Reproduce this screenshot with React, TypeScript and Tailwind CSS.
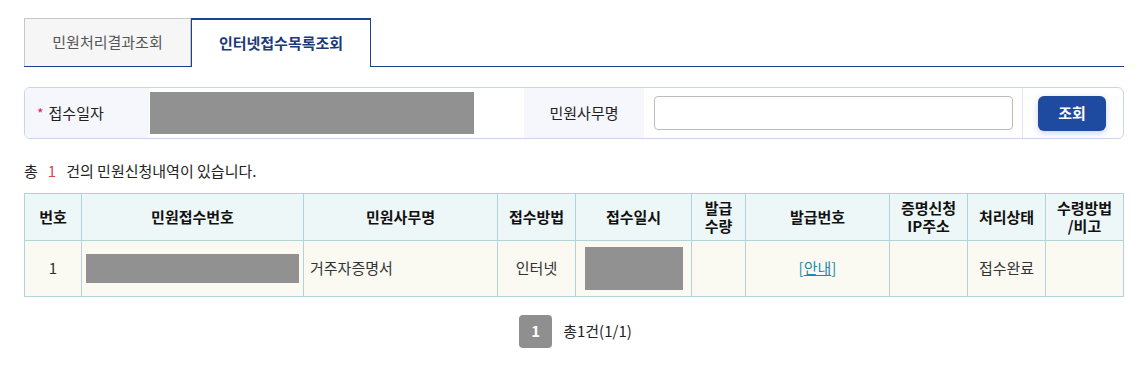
import React from 'react'

const font = { fontFamily: '"Noto Sans CJK KR", "Noto Sans", sans-serif' }

const cols = [
  { w: 'w-[57px]', h: '번호' },
  { w: 'w-[222px]', h: '민원접수번호' },
  { w: 'w-[194px]', h: '민원사무명' },
  { w: 'w-[78px]', h: '접수방법' },
  { w: 'w-[116px]', h: '접수일시' },
  { w: 'w-[54px]', h: '발급\n수량' },
  { w: 'w-[144px]', h: '발급번호' },
  { w: 'w-[78px]', h: '증명신청\nIP주소' },
  { w: 'w-[78px]', h: '처리상태' },
  { w: 'w-[78px]', h: '수령방법\n/비고' },
]

const App: React.FC = () => {
  return (
    <div className="w-[1141px] h-[365px] bg-white px-[24px] pt-[18px] text-[#222]" style={font}>
      {/* tabs */}
      <div className="flex w-[1100px] border-b border-[#1d4390]">
        <div className="w-[167px] h-[48px] flex items-center justify-center bg-[#f6f6f6] border border-b-0 border-[#c8c8c8] text-[15px] text-[#555] mb-[-1px] border-b-[#1d4390]">
          민원처리결과조회
        </div>
        <div className="w-[180px] h-[49px] flex items-center justify-center bg-white border-2 border-b-0 border-[#1d4390] border-t-[2px] text-[15px] font-bold text-[#1d3a78] mb-[-1px] border-l-[1px] border-r-[1px]">
          인터넷접수목록조회
        </div>
      </div>

      {/* search */}
      <div className="mt-[20px] w-[1100px] h-[52px] flex items-stretch border border-[#c6d6ec] rounded-[6px] overflow-hidden">
        <div className="w-[124px] flex items-center pl-[12px] bg-[#f5f7fc] text-[15px]">
          <span className="text-[#e0245e] mr-[5px] text-[14px]">*</span>
          <span>접수일자</span>
        </div>
        <div className="w-[375px] flex items-center pl-[1px]">
          <div className="w-[324px] h-[42px] bg-[#919191]" />
        </div>
        <div className="w-[120px] flex items-center justify-center bg-[#f5f7fc] text-[15px]">민원사무명</div>
        <div className="w-[379px] flex items-center pl-[10px] border-r border-[#dfe6f1]">
          <div className="w-[359px] h-[34px] border border-[#bbb] rounded-[4px] bg-white" />
        </div>
        <div className="flex-1 flex items-center pl-[15px]">
          <button className="w-[68px] h-[35px] rounded-[6px] bg-[#1e4aa0] text-white font-bold text-[15px] shadow-[0_2px_6px_rgba(30,74,160,0.25)]">
            조회
          </button>
        </div>
      </div>

      {/* summary */}
      <div className="mt-[20px] text-[15px] text-[#222] flex items-center h-[24px]">
        <span>총</span>
        <span className="text-[#e04848] mx-[10px]">1</span>
        <span>건의 민원신청내역이 있습니다.</span>
      </div>

      {/* table */}
      <table className="mt-[10px] w-[1100px] border-collapse table-fixed text-[15px]">
        <thead>
          <tr className="h-[47px] bg-[#eef7f7]">
            {cols.map((c, i) => (
              <th key={i} className={`${c.w} border border-[#b3d3da] font-bold text-[15px] leading-[18px] whitespace-pre-line text-[#111]`}>
                {c.h}
              </th>
            ))}
          </tr>
        </thead>
        <tbody>
          <tr className="h-[56px] bg-[#fafaf3] text-[#333]">
            <td className="border border-[#b3d3da] text-center">1</td>
            <td className="border border-[#b3d3da] px-[3px]">
              <div className="w-[213px] h-[29px] bg-[#919191] ml-[1px]" />
            </td>
            <td className="border border-[#b3d3da] pl-[6px]">거주자증명서</td>
            <td className="border border-[#b3d3da] text-center">인터넷</td>
            <td className="border border-[#b3d3da]">
              <div className="w-[98px] h-[43px] bg-[#919191] ml-[9px]" />
            </td>
            <td className="border border-[#b3d3da]" />
            <td className="border border-[#b3d3da] text-center">
              <span className="text-[#1a8aa8]">[<span className="underline">안내</span>]</span>
            </td>
            <td className="border border-[#b3d3da]" />
            <td className="border border-[#b3d3da] text-center">접수완료</td>
            <td className="border border-[#b3d3da]" />
          </tr>
        </tbody>
      </table>

      {/* paging */}
      <div className="mt-[18px] flex items-center justify-center gap-[11px] pl-[10px]">
        <div className="w-[33px] h-[33px] rounded-[4px] bg-[#8f8f8f] text-white font-bold text-[15px] flex items-center justify-center">1</div>
        <span className="text-[15px] text-[#222]">총1건(1/1)</span>
      </div>
    </div>
  )
}

export default App
